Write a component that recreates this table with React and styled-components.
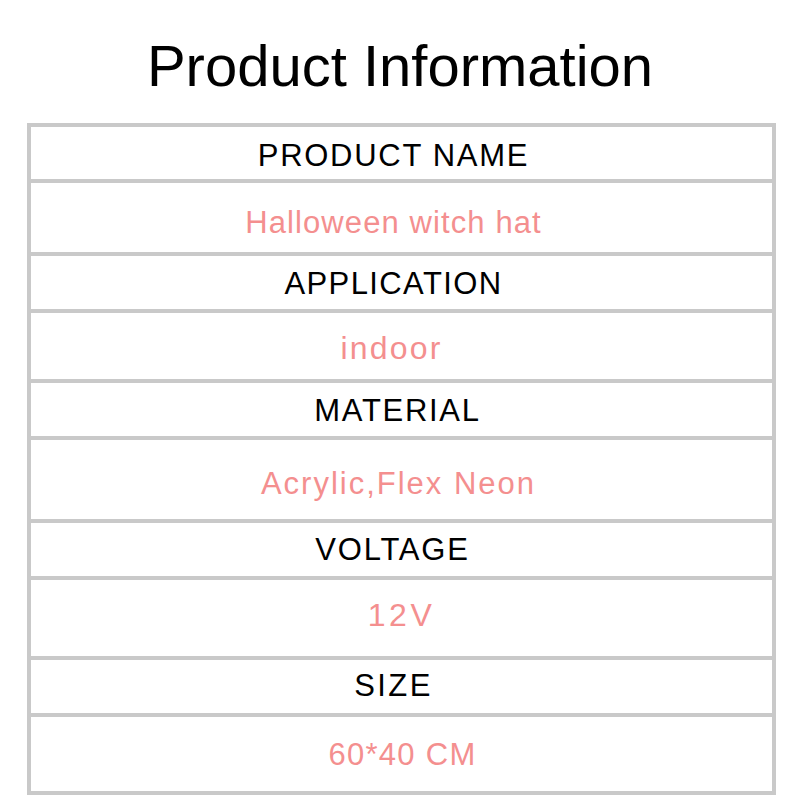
import React from "react";
import styled, { createGlobalStyle } from "styled-components";

const GlobalStyle = createGlobalStyle`
  html, body {
    margin: 0;
    padding: 0;
    background: #ffffff;
  }
  body {
    font-family: "Liberation Sans", Arial, sans-serif;
  }
`;

/**
 * UI
 */
const Page = styled.div`
  width: 800px;
  height: 800px;
  background: #ffffff;
  overflow: hidden;
`;

const Title = styled.h1`
  margin: 0;
  height: 123px;
  box-sizing: border-box;
  padding-top: 37px;
  text-align: center;
  font-size: 58px;
  line-height: 58px;
  font-weight: normal;
  color: #000000;
`;

const Table = styled.div`
  margin-left: 27px;
  width: 749px;
  box-sizing: border-box;
  border: 4px solid #c9c9c9;
  display: flex;
  flex-direction: column;
`;

const Row = styled.div`
  height: ${props => props.h}px;
  border-top: ${props => (props.first ? "none" : "4px solid #c9c9c9")};
  display: flex;
  align-items: center;
  justify-content: center;
`;

const Cell = styled.span`
  font-size: ${props => props.size || 31}px;
  line-height: 1;
  letter-spacing: ${props => props.ls}px;
  color: ${props => (props.value ? "#f48f8f" : "#000000")};
  transform: translate(${props => props.dx || 0}px, ${props => props.dy || 0}px);
  white-space: nowrap;
`;

const rows = [
  { label: "PRODUCT NAME", h: 52, dx: -8, dy: 2, ls: 1.7 },
  { label: "Halloween witch hat", h: 69, dx: -8, dy: 5, ls: 1.1, value: true },
  { label: "APPLICATION", h: 53, dx: -8, dy: 1, ls: 1.4 },
  { label: "indoor", h: 66, dx: -10, dy: 2, ls: 2.2, size: 32, value: true },
  { label: "MATERIAL", h: 53, dx: -4, dy: 1, ls: 1.7 },
  { label: "Acrylic,Flex Neon", h: 79, dx: -3, dy: 4, ls: 2, value: true },
  { label: "VOLTAGE", h: 53, dx: -9, dy: 0, ls: 1.8 },
  { label: "12V", h: 76, dx: 0, dy: -3, ls: 3.5, size: 32, value: true },
  { label: "SIZE", h: 53, dx: -8, dy: -1, ls: 2.4 },
  { label: "60*40 CM", h: 74, dx: 1, dy: 0, ls: 1.3, value: true }
];

/**
 * Component
 */
export default function App() {
  return (
    <Page>
      <GlobalStyle />
      <Title>Product Information</Title>
      <Table>
        {rows.map((row, i) => (
          <Row key={i} h={row.h} first={i === 0}>
            <Cell
              value={row.value}
              size={row.size}
              ls={row.ls}
              dx={row.dx}
              dy={row.dy}
            >
              {row.label}
            </Cell>
          </Row>
        ))}
      </Table>
    </Page>
  );
}
